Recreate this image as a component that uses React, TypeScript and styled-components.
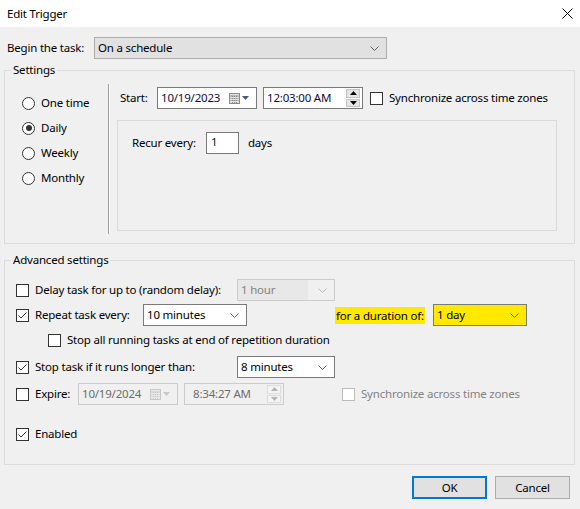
import React from 'react';
import styled, { createGlobalStyle, css } from 'styled-components';

const GlobalStyle = createGlobalStyle`
  html, body {
    margin: 0;
    padding: 0;
  }
  body {
    background: #f0f0f0;
    font-family: "Noto Sans", "Segoe UI", sans-serif;
    font-size: 11.5px;
    letter-spacing: -0.2px;
    line-height: 16px;
    color: #000;
  }
  * {
    box-sizing: border-box;
  }
`;

const Window = styled.div`
  width: 580px;
  height: 509px;
  display: flex;
  flex-direction: column;
  background: #f0f0f0;
  overflow: hidden;
`;

const TitleBar = styled.div`
  height: 27px;
  flex: none;
  background: #fff;
  display: flex;
  align-items: center;
  justify-content: space-between;
  padding: 0 7px 0 7px;
`;

const TitleText = styled.span`
  font-size: 11.5px;
`;

const Body = styled.div`
  padding: 0 5px 0 4px;
  display: flex;
  flex-direction: column;
`;

const BeginRow = styled.div`
  margin-top: 10px;
  height: 22px;
  padding-left: 3px;
  display: flex;
  align-items: center;
`;

const FieldLabel = styled.span<{ $width: number }>`
  width: ${({ $width }) => $width}px;
  flex: none;
  white-space: nowrap;
`;

type Tone = 'plain' | 'button' | 'disabled' | 'marked';

const Combo = styled.div<{ $width: number; $tone?: Tone }>`
  width: ${({ $width }) => $width}px;
  height: 22px;
  flex: none;
  display: flex;
  align-items: center;
  justify-content: space-between;
  padding: 0 7px 0 3px;
  border: 1px solid #7a7a7a;
  background: #fff;
  white-space: nowrap;
  ${({ $tone }) =>
    $tone === 'button' &&
    css`
      background: #e1e1e1;
      border-color: #adadad;
    `}
  ${({ $tone }) =>
    $tone === 'disabled' &&
    css`
      background: linear-gradient(to right, #e8e8e8 0, #e8e8e8 70px, #f0f0f0 70px);
      border-color: #cccccc;
      color: #838383;
    `}
  ${({ $tone }) =>
    $tone === 'marked' &&
    css`
      background: #ffe900;
      border-color: #7a7a7a;
    `}
`;

const Chevron = ({ color = '#606060' }: { color?: string }) => (
  <svg width="9" height="5" viewBox="0 0 9 5">
    <polyline points="0.5,0.5 4.5,4.5 8.5,0.5" fill="none" stroke={color} strokeWidth="1" />
  </svg>
);

const GroupBox = styled.fieldset<{ $top: number }>`
  margin: ${({ $top }) => $top}px 0 0 0;
  padding: 0 6px;
  border: 1px solid #dcdcdc;
  min-width: 0;
`;

const GroupTitle = styled.legend`
  padding: 0 2px;
  margin-left: 0;
  line-height: 16px;
  height: 16px;
`;

const SettingsGrid = styled.div`
  display: grid;
  grid-template-columns: 97px 2px 1fr;
  margin-top: 6px;
  height: 150px;
  margin-bottom: 9px;
`;

const RadioList = styled.div`
  display: flex;
  flex-direction: column;
  gap: 9px;
  padding: 11px 0 0 11px;
`;

const RadioItem = styled.label`
  display: flex;
  align-items: center;
  height: 16px;
  gap: 6px;
`;

const RadioCircle = styled.span<{ $checked?: boolean }>`
  width: 13px;
  height: 13px;
  flex: none;
  border: 1px solid #333;
  border-radius: 50%;
  background: #fff;
  display: flex;
  align-items: center;
  justify-content: center;
  &::after {
    content: '';
    width: 6px;
    height: 6px;
    border-radius: 50%;
    background: ${({ $checked }) => ($checked ? '#333' : 'transparent')};
  }
`;

const Separator = styled.div`
  border-left: 1px solid #a0a0a0;
  border-right: 1px solid #fff;
`;

const SchedulePanel = styled.div`
  display: flex;
  flex-direction: column;
  padding: 3px 0 0 7px;
`;

const StartRow = styled.div`
  display: flex;
  align-items: center;
  height: 22px;
  padding-left: 3px;
`;

const Spacer = styled.span<{ $width: number }>`
  width: ${({ $width }) => $width}px;
  flex: none;
`;

const DateField = styled.div<{ $disabled?: boolean }>`
  width: 100px;
  height: 22px;
  flex: none;
  display: flex;
  align-items: center;
  justify-content: space-between;
  padding: 0 7px 0 3px;
  border: 1px solid ${({ $disabled }) => ($disabled ? '#cccccc' : '#7a7a7a')};
  background: ${({ $disabled }) => ($disabled ? '#f0f0f0' : '#fff')};
  color: ${({ $disabled }) => ($disabled ? '#6d6d6d' : '#1a0a3a')};
`;

const PickerIcons = styled.span`
  display: flex;
  align-items: center;
  gap: 2px;
`;

const CalendarIcon = ({ disabled }: { disabled?: boolean }) => {
  const c = disabled ? '#c8c8c8' : '#8a8a8a';
  const f = disabled ? '#ececec' : '#e4e4e4';
  return (
    <svg width="11" height="11" viewBox="0 0 11 11">
      <rect x="0.5" y="0.5" width="10" height="10" fill={f} stroke={c} />
      <line x1="0.5" y1="3" x2="10.5" y2="3" stroke={c} />
      <line x1="3.5" y1="3" x2="3.5" y2="10.5" stroke={c} strokeDasharray="1 1" />
      <line x1="5.5" y1="3" x2="5.5" y2="10.5" stroke={c} strokeDasharray="1 1" />
      <line x1="7.5" y1="3" x2="7.5" y2="10.5" stroke={c} strokeDasharray="1 1" />
      <line x1="0.5" y1="5.5" x2="10.5" y2="5.5" stroke={c} strokeDasharray="1 1" />
      <line x1="0.5" y1="7.5" x2="10.5" y2="7.5" stroke={c} strokeDasharray="1 1" />
    </svg>
  );
};

const DropTriangle = ({ disabled }: { disabled?: boolean }) => (
  <svg width="7" height="4" viewBox="0 0 7 4">
    <polygon points="0,0 7,0 3.5,4" fill={disabled ? '#c8c8c8' : '#4a5a7a'} />
  </svg>
);

const TimeField = styled.div<{ $disabled?: boolean }>`
  width: 100px;
  height: 22px;
  flex: none;
  display: flex;
  align-items: center;
  justify-content: space-between;
  padding: 0 2px 0 ${({ $disabled }) => ($disabled ? 8 : 3)}px;
  border: 1px solid ${({ $disabled }) => ($disabled ? '#cccccc' : '#7a7a7a')};
  background: ${({ $disabled }) => ($disabled ? '#f0f0f0' : '#fff')};
  color: ${({ $disabled }) => ($disabled ? '#6d6d6d' : '#1a0a3a')};
`;

const SpinBox = styled.span`
  width: 14px;
  height: 18px;
  display: flex;
  flex-direction: column;
  gap: 1px;
`;

const SpinHalf = styled.span<{ $disabled?: boolean }>`
  flex: 1;
  display: flex;
  align-items: center;
  justify-content: center;
  background: ${({ $disabled }) => ($disabled ? '#f4f4f4' : '#e5e5e5')};
  border: 1px solid ${({ $disabled }) => ($disabled ? '#dcdcdc' : '#c4c4c4')};
`;

const SpinArrow = ({ up, disabled }: { up?: boolean; disabled?: boolean }) => (
  <svg width="7" height="4" viewBox="0 0 7 4">
    <polygon points={up ? '0,4 7,4 3.5,0' : '0,0 7,0 3.5,4'} fill={disabled ? '#b4b4b4' : '#000'} />
  </svg>
);

const RecurBox = styled.div`
  margin-top: 11px;
  width: 440px;
  height: 111px;
  border: 1px solid #dadada;
  padding: 11px 0 0 14px;
`;

const RecurRow = styled.div`
  display: flex;
  align-items: center;
  height: 22px;
`;

const NumberInput = styled.div`
  width: 33px;
  height: 22px;
  flex: none;
  border: 1px solid #7a7a7a;
  background: #fff;
  padding: 1px 0 0 4px;
  color: #1a0a3a;
  margin-right: 9px;
`;

const AdvancedList = styled.div`
  display: flex;
  flex-direction: column;
  padding: 11px 0 19px 5px;
`;

const OptionRow = styled.div<{ $top?: number; $indent?: number }>`
  display: flex;
  align-items: center;
  height: 22px;
  margin-top: ${({ $top = 0 }) => $top}px;
  padding-left: ${({ $indent = 0 }) => $indent}px;
  white-space: nowrap;
`;

const CheckBox = styled.span<{ $disabled?: boolean }>`
  width: 13px;
  height: 13px;
  flex: none;
  border: 1px solid ${({ $disabled }) => ($disabled ? '#bcbcbc' : '#333')};
  background: #fff;
  display: flex;
  align-items: center;
  justify-content: center;
  margin-right: 6px;
`;

const OptionText = styled.span<{ $width?: number; $disabled?: boolean }>`
  ${({ $width }) => ($width ? `width: ${$width}px; flex: none;` : '')}
  color: ${({ $disabled }) => ($disabled ? '#838383' : '#000')};
`;

const Highlight = styled.span<{ $left: number }>`
  margin-left: ${({ $left }) => $left}px;
  margin-right: 8px;
  background: #ffe900;
  padding: 0 1px;
  width: 90px;
  line-height: 17px;
`;

const Footer = styled.div`
  display: flex;
  justify-content: flex-end;
  gap: 8px;
  margin-top: 11px;
  padding-right: 5px;
`;

const DialogButton = styled.button<{ $default?: boolean }>`
  width: 75px;
  height: 23px;
  font: inherit;
  letter-spacing: inherit;
  color: #000;
  background: #e1e1e1;
  border: ${({ $default }) => ($default ? '2px solid #0078d7' : '1px solid #adadad')};
  padding: 0;
`;

const Check = ({ checked, disabled }: { checked?: boolean; disabled?: boolean }) => (
  <CheckBox $disabled={disabled}>
    {checked && (
      <svg width="11" height="11" viewBox="0 0 11 11">
        <polyline points="1.5,5.5 4,8 9.5,2.5" fill="none" stroke="#333" strokeWidth="1" />
      </svg>
    )}
  </CheckBox>
);

const DatePicker = ({ value, disabled }: { value: string; disabled?: boolean }) => (
  <DateField $disabled={disabled}>
    <span>{value}</span>
    <PickerIcons>
      <CalendarIcon disabled={disabled} />
      <DropTriangle disabled={disabled} />
    </PickerIcons>
  </DateField>
);

const TimePicker = ({ value, disabled }: { value: string; disabled?: boolean }) => (
  <TimeField $disabled={disabled}>
    <span>{value}</span>
    <SpinBox>
      <SpinHalf $disabled={disabled}>
        <SpinArrow up disabled={disabled} />
      </SpinHalf>
      <SpinHalf $disabled={disabled}>
        <SpinArrow disabled={disabled} />
      </SpinHalf>
    </SpinBox>
  </TimeField>
);

const schedules = ['One time', 'Daily', 'Weekly', 'Monthly'];

const App: React.FC = () => {
  return (
    <Window>
      <GlobalStyle />
      <TitleBar>
        <TitleText>Edit Trigger</TitleText>
        <svg width="11" height="11" viewBox="0 0 11 11">
          <line x1="0.5" y1="0.5" x2="10.5" y2="10.5" stroke="#000" strokeWidth="1" />
          <line x1="10.5" y1="0.5" x2="0.5" y2="10.5" stroke="#000" strokeWidth="1" />
        </svg>
      </TitleBar>

      <Body>
        <BeginRow>
          <FieldLabel $width={87}>Begin the task:</FieldLabel>
          <Combo $width={293} $tone="button">
            <span>On a schedule</span>
            <Chevron />
          </Combo>
        </BeginRow>

        <GroupBox $top={3}>
          <GroupTitle>Settings</GroupTitle>
          <SettingsGrid>
            <RadioList>
              {schedules.map((s) => (
                <RadioItem key={s}>
                  <RadioCircle $checked={s === 'Daily'} />
                  {s}
                </RadioItem>
              ))}
            </RadioList>
            <Separator />
            <SchedulePanel>
              <StartRow>
                <FieldLabel $width={37}>Start:</FieldLabel>
                <DatePicker value="10/19/2023" />
                <Spacer $width={6} />
                <TimePicker value="12:03:00 AM" />
                <Spacer $width={7} />
                <Check />
                <span>Synchronize across time zones</span>
              </StartRow>
              <RecurBox>
                <RecurRow>
                  <FieldLabel $width={74}>Recur every:</FieldLabel>
                  <NumberInput>1</NumberInput>
                  <span>days</span>
                </RecurRow>
              </RecurBox>
            </SchedulePanel>
          </SettingsGrid>
        </GroupBox>

        <GroupBox $top={8}>
          <GroupTitle>Advanced settings</GroupTitle>
          <AdvancedList>
            <OptionRow>
              <Check />
              <OptionText $width={202}>Delay task for up to (random delay):</OptionText>
              <Combo $width={98} $tone="disabled">
                <span>1 hour</span>
                <Chevron color="#b8b8b8" />
              </Combo>
            </OptionRow>
            <OptionRow $top={3}>
              <Check checked />
              <OptionText $width={108}>Repeat task every:</OptionText>
              <Combo $width={104}>
                <span>10 minutes</span>
                <Chevron />
              </Combo>
              <Highlight $left={88}>for a duration of:</Highlight>
              <Combo $width={94} $tone="marked">
                <span>1 day</span>
                <Chevron />
              </Combo>
            </OptionRow>
            <OptionRow $top={3} $indent={32}>
              <Check />
              <OptionText>Stop all running tasks at end of repetition duration</OptionText>
            </OptionRow>
            <OptionRow $top={5}>
              <Check checked />
              <OptionText $width={202}>Stop task if it runs longer than:</OptionText>
              <Combo $width={98}>
                <span>8 minutes</span>
                <Chevron />
              </Combo>
            </OptionRow>
            <OptionRow $top={5}>
              <Check />
              <OptionText $width={43}>Expire:</OptionText>
              <DatePicker value="10/19/2024" disabled />
              <Spacer $width={6} />
              <TimePicker value="8:34:27 AM" disabled />
              <Spacer $width={58} />
              <Check disabled />
              <OptionText $disabled>Synchronize across time zones</OptionText>
            </OptionRow>
            <OptionRow $top={18}>
              <Check checked />
              <OptionText>Enabled</OptionText>
            </OptionRow>
          </AdvancedList>
        </GroupBox>

        <Footer>
          <DialogButton $default>OK</DialogButton>
          <DialogButton>Cancel</DialogButton>
        </Footer>
      </Body>
    </Window>
  );
};

export default App;
